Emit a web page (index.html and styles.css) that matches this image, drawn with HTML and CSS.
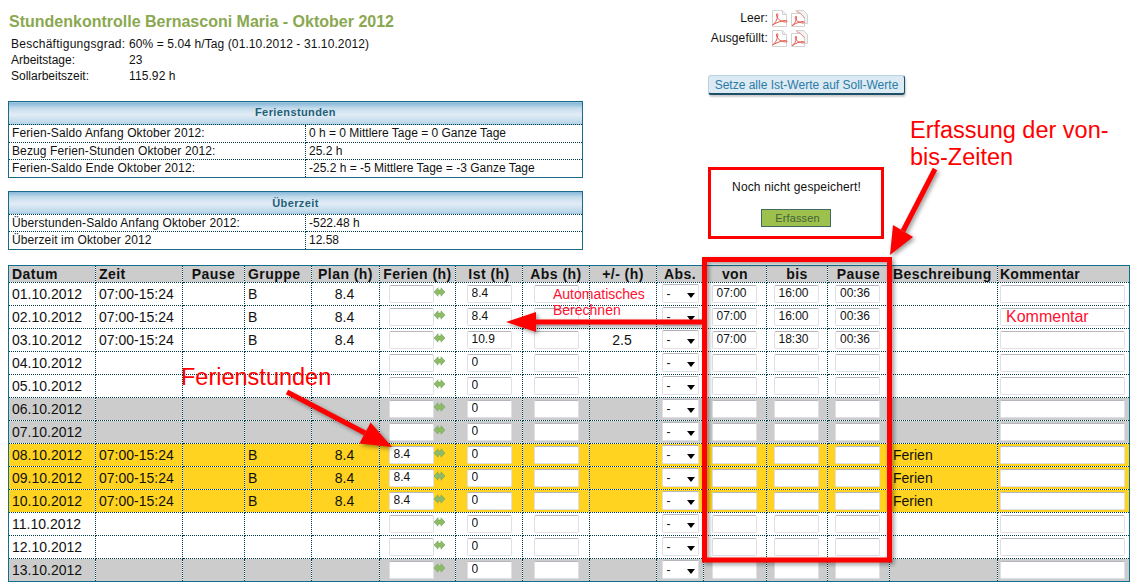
FILE: index.html
```html
<!DOCTYPE html>
<html lang="de">
<head>
<meta charset="utf-8">
<title>Stundenkontrolle</title>
<link rel="stylesheet" href="styles.css">
</head>
<body>
<svg class="defs" width="0" height="0" aria-hidden="true">
  <symbol id="arr" viewBox="0 0 11 10">
    <path d="M0 5 4 .8V3h3V.8L11 5 7 9.2V7H4v2.2z" fill="#8dbb68" stroke="#76a456" stroke-width=".6"/>
  </symbol>
  <symbol id="pdf" viewBox="0 0 17 17">
    <path d="M1.500 .5h10l4 4v12h-14z" fill="#fff" stroke="#d2d2d2"/>
    <path d="M11.500 .5v4h4" fill="#eee" stroke="#d2d2d2"/>
    <path d="M1.500 15c2.500-1.200 4.800-5.500 5.300-9.500.2-2.500-1.300-2.500-1.300-.5 0 3.500 4.500 7 9.500 7 1.800 0 1.300-1.500-.5-1.500-3.500 0-8.500 1.800-13 4.500z" fill="none" stroke="#e5574d" stroke-width="1"/>
  </symbol>
  <symbol id="pdfs" viewBox="0 0 17 17">
    <path d="M4.500 .5h8l4 4v9h-3" fill="#f2f2f2" stroke="#d2d2d2"/>
    <path d="M.5 3.500h9l4 4v9h-13z" fill="#fff" stroke="#d2d2d2"/>
    <path d="M1 15.500c2.500-1.200 4-4.500 4.500-7.500.2-2.500-1.200-2.500-1.200-.5 0 3 4 5.500 8.200 5.500 1.500 0 1-1.500-.5-1.500-3 0-7 1.500-10.500 4z" fill="none" stroke="#e5574d" stroke-width="1"/>
    <path d="M5.500 1.500c3 1 6 3.500 8 6.500" fill="none" stroke="#e58a82" stroke-width="1"/>
  </symbol>
</svg>

<main class="page">
  <section class="top">
    <div class="left">
      <h1>Stundenkontrolle Bernasconi Maria - Oktober 2012</h1>
      <dl class="info">
        <dt class="wideterm">Beschäftigungsgrad:</dt><dd>60% = 5.04 h/Tag (01.10.2012 - 31.10.2012)</dd>
        <dt>Arbeitstage:</dt><dd>23</dd>
        <dt>Sollarbeitszeit:</dt><dd>115.92 h</dd>
      </dl>
      <table class="sum first">
        <colgroup><col class="sc1"><col></colgroup>
        <thead><tr><th colspan="2">Ferienstunden</th></tr></thead>
        <tbody>
          <tr><td class="sl">Ferien-Saldo Anfang Oktober 2012:</td><td>0 h = 0 Mittlere Tage = 0 Ganze Tage</td></tr>
          <tr><td class="sl">Bezug Ferien-Stunden Oktober 2012:</td><td>25.2 h</td></tr>
          <tr><td class="sl">Ferien-Saldo Ende Oktober 2012:</td><td>-25.2 h = -5 Mittlere Tage = -3 Ganze Tage</td></tr>
        </tbody>
      </table>
      <table class="sum second">
        <colgroup><col class="sc1"><col></colgroup>
        <thead><tr><th colspan="2">Überzeit</th></tr></thead>
        <tbody>
          <tr><td class="sl">Überstunden-Saldo Anfang Oktober 2012:</td><td>-522.48 h</td></tr>
          <tr><td class="sl">Überzeit im Oktober 2012</td><td>12.58</td></tr>
        </tbody>
      </table>
    </div>
    <div class="right">
      <div class="pdfrow"><span class="pl">Leer:</span><svg class="pi"><use href="#pdf"/></svg><svg class="pi"><use href="#pdfs"/></svg></div>
      <div class="pdfrow"><span class="pl">Ausgefüllt:</span><svg class="pi"><use href="#pdf"/></svg><svg class="pi"><use href="#pdfs"/></svg></div>
      <button class="setall" type="button">Setze alle Ist-Werte auf Soll-Werte</button>
      <div class="notice">
        <p>Noch nicht gespeichert!</p>
        <button class="save" type="button">Erfassen</button>
      </div>
    </div>
  </section>

  <table class="grid">
    <colgroup>
      <col class="c87"><col class="c87"><col class="c62"><col class="c67b"><col class="c68"><col class="c76"><col class="c67"><col class="c67"><col class="c67"><col class="c47"><col class="c63"><col class="c61"><col class="c62"><col class="c108"><col class="c132">
    </colgroup>
    <thead>
      <tr><th class="l">Datum</th><th class="l">Zeit</th><th>Pause</th><th class="l">Gruppe</th><th>Plan (h)</th><th>Ferien (h)</th><th>Ist (h)</th><th>Abs (h)</th><th>+/- (h)</th><th>Abs.</th><th>von</th><th>bis</th><th>Pause</th><th class="l">Beschreibung</th><th class="l last">Kommentar</th></tr>
    </thead>
    <tbody>
      <tr><td>01.10.2012</td><td>07:00-15:24</td><td></td><td>B</td><td class="m">8.4</td><td class="m"><span class="fer"><input class="in"><svg class="ar"><use href="#arr"/></svg></span></td><td class="m n"><input class="in" value="8.4"></td><td class="m n"><input class="in"></td><td class="m"></td><td class="m n"><span class="sel">-</span></td><td class="m"><input class="in" value="07:00"></td><td class="m"><input class="in" value="16:00"></td><td class="m"><input class="in" value="00:36"></td><td></td><td class="m"><input class="in wide"></td></tr>
      <tr><td>02.10.2012</td><td>07:00-15:24</td><td></td><td>B</td><td class="m">8.4</td><td class="m"><span class="fer"><input class="in"><svg class="ar"><use href="#arr"/></svg></span></td><td class="m n"><input class="in" value="8.4"></td><td class="m n"><input class="in"></td><td class="m"></td><td class="m n"><span class="sel">-</span></td><td class="m"><input class="in" value="07:00"></td><td class="m"><input class="in" value="16:00"></td><td class="m"><input class="in" value="00:36"></td><td></td><td class="m"><input class="in wide"></td></tr>
      <tr><td>03.10.2012</td><td>07:00-15:24</td><td></td><td>B</td><td class="m">8.4</td><td class="m"><span class="fer"><input class="in"><svg class="ar"><use href="#arr"/></svg></span></td><td class="m n"><input class="in" value="10.9"></td><td class="m n"><input class="in"></td><td class="m">2.5</td><td class="m n"><span class="sel">-</span></td><td class="m"><input class="in" value="07:00"></td><td class="m"><input class="in" value="18:30"></td><td class="m"><input class="in" value="00:36"></td><td></td><td class="m"><input class="in wide"></td></tr>
      <tr><td>04.10.2012</td><td></td><td></td><td></td><td></td><td class="m"><span class="fer"><input class="in"><svg class="ar"><use href="#arr"/></svg></span></td><td class="m n"><input class="in" value="0"></td><td class="m n"><input class="in"></td><td></td><td class="m n"><span class="sel">-</span></td><td class="m"><input class="in"></td><td class="m"><input class="in"></td><td class="m"><input class="in"></td><td></td><td class="m"><input class="in wide"></td></tr>
      <tr><td>05.10.2012</td><td></td><td></td><td></td><td></td><td class="m"><span class="fer"><input class="in"><svg class="ar"><use href="#arr"/></svg></span></td><td class="m n"><input class="in" value="0"></td><td class="m n"><input class="in"></td><td></td><td class="m n"><span class="sel">-</span></td><td class="m"><input class="in"></td><td class="m"><input class="in"></td><td class="m"><input class="in"></td><td></td><td class="m"><input class="in wide"></td></tr>
      <tr class="we"><td>06.10.2012</td><td></td><td></td><td></td><td></td><td class="m"><span class="fer"><input class="in"><svg class="ar"><use href="#arr"/></svg></span></td><td class="m n"><input class="in" value="0"></td><td class="m n"><input class="in"></td><td></td><td class="m n"><span class="sel">-</span></td><td class="m"><input class="in"></td><td class="m"><input class="in"></td><td class="m"><input class="in"></td><td></td><td class="m"><input class="in wide"></td></tr>
      <tr class="we"><td>07.10.2012</td><td></td><td></td><td></td><td></td><td class="m"><span class="fer"><input class="in"><svg class="ar"><use href="#arr"/></svg></span></td><td class="m n"><input class="in" value="0"></td><td class="m n"><input class="in"></td><td></td><td class="m n"><span class="sel">-</span></td><td class="m"><input class="in"></td><td class="m"><input class="in"></td><td class="m"><input class="in"></td><td></td><td class="m"><input class="in wide"></td></tr>
      <tr class="ho"><td>08.10.2012</td><td>07:00-15:24</td><td></td><td>B</td><td class="m">8.4</td><td class="m"><span class="fer"><input class="in" value="8.4"><svg class="ar"><use href="#arr"/></svg></span></td><td class="m n"><input class="in" value="0"></td><td class="m n"><input class="in"></td><td></td><td class="m n"><span class="sel">-</span></td><td class="m"><input class="in"></td><td class="m"><input class="in"></td><td class="m"><input class="in"></td><td>Ferien</td><td class="m"><input class="in wide"></td></tr>
      <tr class="ho"><td>09.10.2012</td><td>07:00-15:24</td><td></td><td>B</td><td class="m">8.4</td><td class="m"><span class="fer"><input class="in" value="8.4"><svg class="ar"><use href="#arr"/></svg></span></td><td class="m n"><input class="in" value="0"></td><td class="m n"><input class="in"></td><td></td><td class="m n"><span class="sel">-</span></td><td class="m"><input class="in"></td><td class="m"><input class="in"></td><td class="m"><input class="in"></td><td>Ferien</td><td class="m"><input class="in wide"></td></tr>
      <tr class="ho"><td>10.10.2012</td><td>07:00-15:24</td><td></td><td>B</td><td class="m">8.4</td><td class="m"><span class="fer"><input class="in" value="8.4"><svg class="ar"><use href="#arr"/></svg></span></td><td class="m n"><input class="in" value="0"></td><td class="m n"><input class="in"></td><td></td><td class="m n"><span class="sel">-</span></td><td class="m"><input class="in"></td><td class="m"><input class="in"></td><td class="m"><input class="in"></td><td>Ferien</td><td class="m"><input class="in wide"></td></tr>
      <tr><td>11.10.2012</td><td></td><td></td><td></td><td></td><td class="m"><span class="fer"><input class="in"><svg class="ar"><use href="#arr"/></svg></span></td><td class="m n"><input class="in" value="0"></td><td class="m n"><input class="in"></td><td></td><td class="m n"><span class="sel">-</span></td><td class="m"><input class="in"></td><td class="m"><input class="in"></td><td class="m"><input class="in"></td><td></td><td class="m"><input class="in wide"></td></tr>
      <tr><td>12.10.2012</td><td></td><td></td><td></td><td></td><td class="m"><span class="fer"><input class="in"><svg class="ar"><use href="#arr"/></svg></span></td><td class="m n"><input class="in" value="0"></td><td class="m n"><input class="in"></td><td></td><td class="m n"><span class="sel">-</span></td><td class="m"><input class="in"></td><td class="m"><input class="in"></td><td class="m"><input class="in"></td><td></td><td class="m"><input class="in wide"></td></tr>
      <tr class="we"><td>13.10.2012</td><td></td><td></td><td></td><td></td><td class="m"><span class="fer"><input class="in"><svg class="ar"><use href="#arr"/></svg></span></td><td class="m n"><input class="in" value="0"></td><td class="m n"><input class="in"></td><td></td><td class="m n"><span class="sel">-</span></td><td class="m"><input class="in"></td><td class="m"><input class="in"></td><td class="m"><input class="in"></td><td></td><td class="m"><input class="in wide"></td></tr>
    </tbody>
  </table>

  <div class="annot">
    <svg class="marks" width="1140" height="584" viewBox="0 0 1140 584">
      <rect class="bigbox" x="704.500" y="259.500" width="185" height="300.500"/>
      <path class="shaft" d="M935 169 903 231"/>
      <path class="head" d="M893 225 913 237 890 255z"/>
      <path class="shaft" d="M702 322H534"/>
      <path class="head" d="M536 312V332L506 322z"/>
      <path class="shaft" d="M287 392 365 433"/>
      <path class="head" d="M359.400 443.600 370.600 422.400 392 447z"/>
    </svg>
    <span class="note big n1">Erfassung der von-<br>bis-Zeiten</span>
    <span class="note big n2">Ferienstunden</span>
    <span class="note small n3">Automatisches<br>Berechnen</span>
    <span class="note mid n4">Kommentar</span>
  </div>
</main>
</body>
</html>
```
FILE: styles.css
```css
* { box-sizing: border-box; }
html, body { margin: 0; padding: 0; background: #fff; }
body { font-family: "Liberation Sans", Arial, sans-serif; color: #111; overflow: hidden; }
.defs { position: absolute; }
.page { position: relative; width: 1140px; height: 584px; padding: 0 8px; overflow: hidden; }

.top { display: flex; height: 265px; }
.left { width: 575px; padding-top: 13px; }
h1 { margin: 0 0 0 1px; font-size: 16px; line-height: 18px; font-weight: bold; color: #8aa850; }
.info { display: grid; grid-template-columns: 118px 1fr; grid-auto-rows: 16px; margin: 5px 0 17px 3px; font-size: 12px; line-height: 16px; color: #111; }
.info dt, .info dd { margin: 0; }
.info dd { letter-spacing: .1px; }
.info .wideterm { letter-spacing: .26px; }

.sum { width: 575px; border-collapse: collapse; table-layout: fixed; font-size: 12px; border: 1px solid #1a6b8a; }
.sc1 { width: 297px; }
.sum th { height: 23px; padding: 0 0 2px; font-size: 11px; letter-spacing: .4px; font-weight: bold; color: #1f5f78; text-align: center; border-bottom: 1px dotted #003c4c; background: linear-gradient(#7fb3d6 0, #c3dbec 25%, #e2edf6 55%, #b5d3e7 100%); }
.second th { padding: 0; }
.sum td { height: 17.500px; padding: 0 3px; color: #111; border-bottom: 1px dotted #003c4c; }
.sum .sl { letter-spacing: .12px; border-right: 1px dotted #003c4c; }
.sum tr:last-child td { border-bottom: 0; }
.second { margin-top: 13px; }

.right { padding: 8px 0 0 125px; }
.pdfrow { display: flex; align-items: center; gap: 3px; height: 20px; font-size: 12px; color: #111; }
.pl { width: 60px; text-align: right; letter-spacing: .1px; }
.pi { width: 17px; height: 17px; }
.setall { display: block; margin: 27px 0 0; width: 197px; height: 20px; padding: 0; font: 12px "Liberation Sans", Arial, sans-serif; color: #2a7ba6; background: #dceaf3; border: 1px solid #b9d3e3; border-right-color: #1d4f68; border-bottom: 2px solid #1d4f68; border-radius: 3px; box-shadow: 1px 2px 2px rgba(0,0,0,.2); }
.notice { width: 176px; height: 72px; margin-top: 72px; padding-top: 10px; border: 3px solid #f00; text-align: center; font-size: 12px; letter-spacing: .15px; color: #111; }
.notice p { margin: 0; line-height: 14px; padding-left: 1px; }
.save { display: block; margin: 15px auto 0 50px; width: 70px; height: 18px; padding: 0 0 0 3px; font: 11px "Liberation Sans", Arial, sans-serif; letter-spacing: .15px; color: #44603a; background: #9dc14c; border: 1px solid #3f6b60; }

.grid { width: 1121px; table-layout: fixed; border-collapse: collapse; font-size: 14px; border: 1px solid #0f6f8c; }
.c87 { width: 87px; } .c62 { width: 62px; } .c67b { width: 67px; } .c68 { width: 68px; } .c76 { width: 76px; } .c67 { width: 67px; } .c47 { width: 47px; } .c63 { width: 63px; } .c61 { width: 61px; } .c108 { width: 108px; } .c132 { width: 132px; }
.grid th { height: 17px; padding: 0 3px; font-size: 14px; letter-spacing: .45px; line-height: 15px; font-weight: bold; color: #111; background: #ccc; text-align: center; white-space: nowrap; overflow: hidden; border: 1px dotted #003c4c; border-top: 1px solid #0f6f8c; }
.grid th.l { text-align: left; }
.grid th.last { padding-left: 2px; letter-spacing: .25px; }
.grid td { height: 23px; padding: 0 3px; line-height: 16px; color: #111; border: 1px dotted #003c4c; white-space: nowrap; overflow: hidden; }
.grid td.m { text-align: center; padding: 0 2px 0 0; }
.grid td.n { padding: 0; }
.we td { background: #ccc; }
.ho td { background: #ffd320; }

.in { display: block; width: 45px; height: 18px; margin: 0 auto 1px; padding: 0 4px 2px; font: 12px "Liberation Sans", Arial, sans-serif; color: #111; background: #fff; border: 1px solid #dfdfe8; border-top-color: #b5b5bd; border-radius: 2px; outline: 0; }
.in.wide { width: 125px; }
.fer { display: flex; justify-content: center; align-items: center; width: 56px; margin: 0 auto; }
.fer .in { margin: 0 0 1px; flex: none; }
.ar { width: 11px; height: 10px; flex: none; margin-bottom: 4px; }
.sel { display: block; position: relative; width: 37px; height: 19px; margin: 0 auto 1px; padding-left: 4px; font-size: 12px; line-height: 18px; text-align: left; color: #111; background: #fff; border: 1px solid #dfdfe8; border-top-color: #b5b5bd; border-radius: 2px; }
.sel::after { content: ""; position: absolute; right: 3px; top: 8px; border-style: solid; border-color: #000 transparent transparent; border-width: 5px 4px 0; }

.annot { position: absolute; left: 0; top: 0; width: 1140px; height: 584px; pointer-events: none; }
.marks { position: absolute; left: 0; top: 0; filter: drop-shadow(2px 2px 2px rgba(0,0,0,.4)); }
.bigbox { fill: none; stroke: #f00; stroke-width: 5; }
.shaft { fill: none; stroke: #f00; stroke-width: 5; }
.head { fill: #f00; }
.note { position: absolute; color: #f00; white-space: nowrap; }
.big { font-size: 23.500px; line-height: 27px; }
.mid { font-size: 16px; line-height: 18px; color: #ff1030; }
.small { font-size: 14px; line-height: 16px; color: #ff1030; }
.n1 { left: 910px; top: 117px; }
.n2 { left: 181px; top: 364px; }
.n3 { left: 553px; top: 286px; }
.n4 { left: 1006px; top: 308px; }
```
